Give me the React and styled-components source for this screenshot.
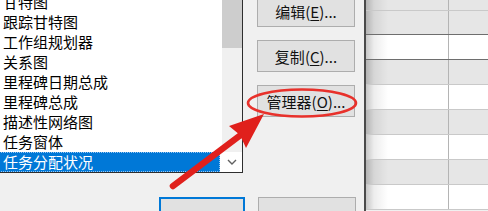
import React from "react";
import styled, { createGlobalStyle } from "styled-components";

const GlobalStyle = createGlobalStyle`
  html, body {
    margin: 0;
    padding: 0;
    background: #f0f0f0;
    overflow: hidden;
  }
  body {
    font-family: "Noto Sans CJK SC", "Microsoft YaHei", sans-serif;
    font-size: 15px;
    color: #000;
  }
`;

const items = [
  "甘特图",
  "跟踪甘特图",
  "工作组规划器",
  "关系图",
  "里程碑日期总成",
  "里程碑总成",
  "描述性网络图",
  "任务窗体",
  "任务分配状况",
];

const buttons = [
  { label: "编辑", key: "E" },
  { label: "复制", key: "C" },
  { label: "管理器", key: "O" },
];

// sheet rows on the right: height, background, colour of the bottom rule
const rows = [
  { h: 10, bg: "#e6e6e6", line: "#c9c9c9" },
  { h: 23, bg: "#e6e6e6", line: "#6e6e6e" },
  { h: 24, bg: "#ffffff", line: "#6e6e6e" },
  { h: 24, bg: "#e6e6e6", line: "#c9c9c9" },
  { h: 24, bg: "#ffffff", line: "#c9c9c9" },
  { h: 24, bg: "#e6e6e6", line: "#c9c9c9" },
  { h: 24, bg: "#ffffff", line: "#c9c9c9" },
  { h: 24, bg: "#e6e6e6", line: "#c9c9c9" },
  { h: 24, bg: "#ffffff", line: "#c9c9c9" },
];

const App = () => {
  return (
    <Page>
      <GlobalStyle />
      <Dialog>
        <TopArea>
          <ListBox>
            <Items>
              {items.map((name, i) => (
                <Item key={name} selected={i === items.length - 1}>
                  {name}
                </Item>
              ))}
            </Items>
            <ScrollBar>
              <Thumb />
              <Track />
              <ArrowBtn>
                <svg width="10" height="6" viewBox="0 0 10 6">
                  <path d="M1 1 L5 5 L9 1" fill="none" stroke="#606060" strokeWidth="1.4" />
                </svg>
              </ArrowBtn>
            </ScrollBar>
          </ListBox>
          <BtnColumn>
            {buttons.map((b) => (
              <Button key={b.key}>
                {b.label}(<u>{b.key}</u>)...
              </Button>
            ))}
          </BtnColumn>
        </TopArea>
        <BottomRow>
          <Button focused wide={86} />
          <Button />
        </BottomRow>
      </Dialog>
      <Sheet>
        {rows.map((r, i) => (
          <SheetRow key={i} h={r.h} bg={r.bg} line={r.line}>
            <Cell />
            <Cell last />
          </SheetRow>
        ))}
      </Sheet>
      <Overlay width="488" height="211" viewBox="0 0 488 211">
        <ellipse cx="302" cy="103" rx="54" ry="13.5" fill="none" stroke="#e8312b" strokeWidth="2.6" />
        <line x1="173" y1="186" x2="242" y2="134" stroke="#e0201c" strokeWidth="6.5" strokeLinecap="round" />
        <polygon points="264,114 229,126 240,135 246,148" fill="#e0201c" />
      </Overlay>
    </Page>
  );
};

export default App;

const Page = styled.div`
  position: relative;
  display: flex;
  width: 488px;
  height: 211px;
  overflow: hidden;
`;

const Dialog = styled.div`
  width: 364px;
  flex-shrink: 0;
  display: flex;
  flex-direction: column;
`;

const TopArea = styled.div`
  display: flex;
  align-items: flex-start;
`;

const ListBox = styled.div`
  margin-left: -1px;
  width: 243px;
  height: 172px;
  display: flex;
  background: #fff;
  border-right: 1px solid #2e2e2e;
  border-bottom: 1px solid #2e2e2e;
  overflow: hidden;
`;

const Items = styled.div`
  flex: 1;
  display: flex;
  flex-direction: column;
  justify-content: flex-end;
  overflow: hidden;
  padding-bottom: 0;
`;

const Item = styled.div`
  flex-shrink: 0;
  height: 20px;
  line-height: 20px;
  padding-left: 4px;
  white-space: nowrap;
  background: ${(p) => (p.selected ? "#0078d7" : "transparent")};
  color: ${(p) => (p.selected ? "#fff" : "#000")};
  outline: ${(p) => (p.selected ? "1px dotted #9ac6f0" : "none")};
  outline-offset: -1px;
`;

const ScrollBar = styled.div`
  width: 20px;
  margin-left: 2px;
  display: flex;
  flex-direction: column;
  background: #f0f0f0;
`;

const Thumb = styled.div`
  height: 48px;
  background: #cdcdcd;
`;

const Track = styled.div`
  flex: 1;
`;

const ArrowBtn = styled.div`
  height: 20px;
  background: #fff;
  display: flex;
  align-items: center;
  justify-content: center;
`;

const BtnColumn = styled.div`
  margin-top: -5px;
  margin-left: 14px;
  display: flex;
  flex-direction: column;
  gap: 13px;
`;

const Button = styled.div`
  box-sizing: border-box;
  width: ${(p) => (p.wide ? p.wide : 98)}px;
  height: 32px;
  background: #e1e1e1;
  border: ${(p) => (p.focused ? "2px solid #0078d7" : "1px solid #adadad")};
  display: flex;
  align-items: center;
  justify-content: center;
  white-space: nowrap;
  font-size: 15px;
  color: #111;

  u {
    text-decoration: underline;
    text-underline-offset: 2px;
    text-decoration-thickness: 1px;
  }
`;

const BottomRow = styled.div`
  margin-top: 24px;
  padding-left: 159px;
  display: flex;
  gap: 13px;
`;

const Sheet = styled.div`
  flex: 1;
  border-left: 2px solid #4a4a4a;
  display: flex;
  flex-direction: column;
`;

const SheetRow = styled.div`
  flex-shrink: 0;
  height: ${(p) => p.h}px;
  border-bottom: 1px solid ${(p) => p.line};
  display: flex;
  background: linear-gradient(to right, rgba(0, 0, 0, 0.22), rgba(0, 0, 0, 0.07) 8px, rgba(0, 0, 0, 0) 22px),
    ${(p) => p.bg};
`;

const Cell = styled.div`
  width: ${(p) => (p.last ? "auto" : "82px")};
  flex: ${(p) => (p.last ? 1 : "none")};
  border-right: ${(p) => (p.last ? "none" : "1px solid #b4b4b4")};
`;

const Overlay = styled.svg`
  position: absolute;
  left: 0;
  top: 0;
  pointer-events: none;
`;
